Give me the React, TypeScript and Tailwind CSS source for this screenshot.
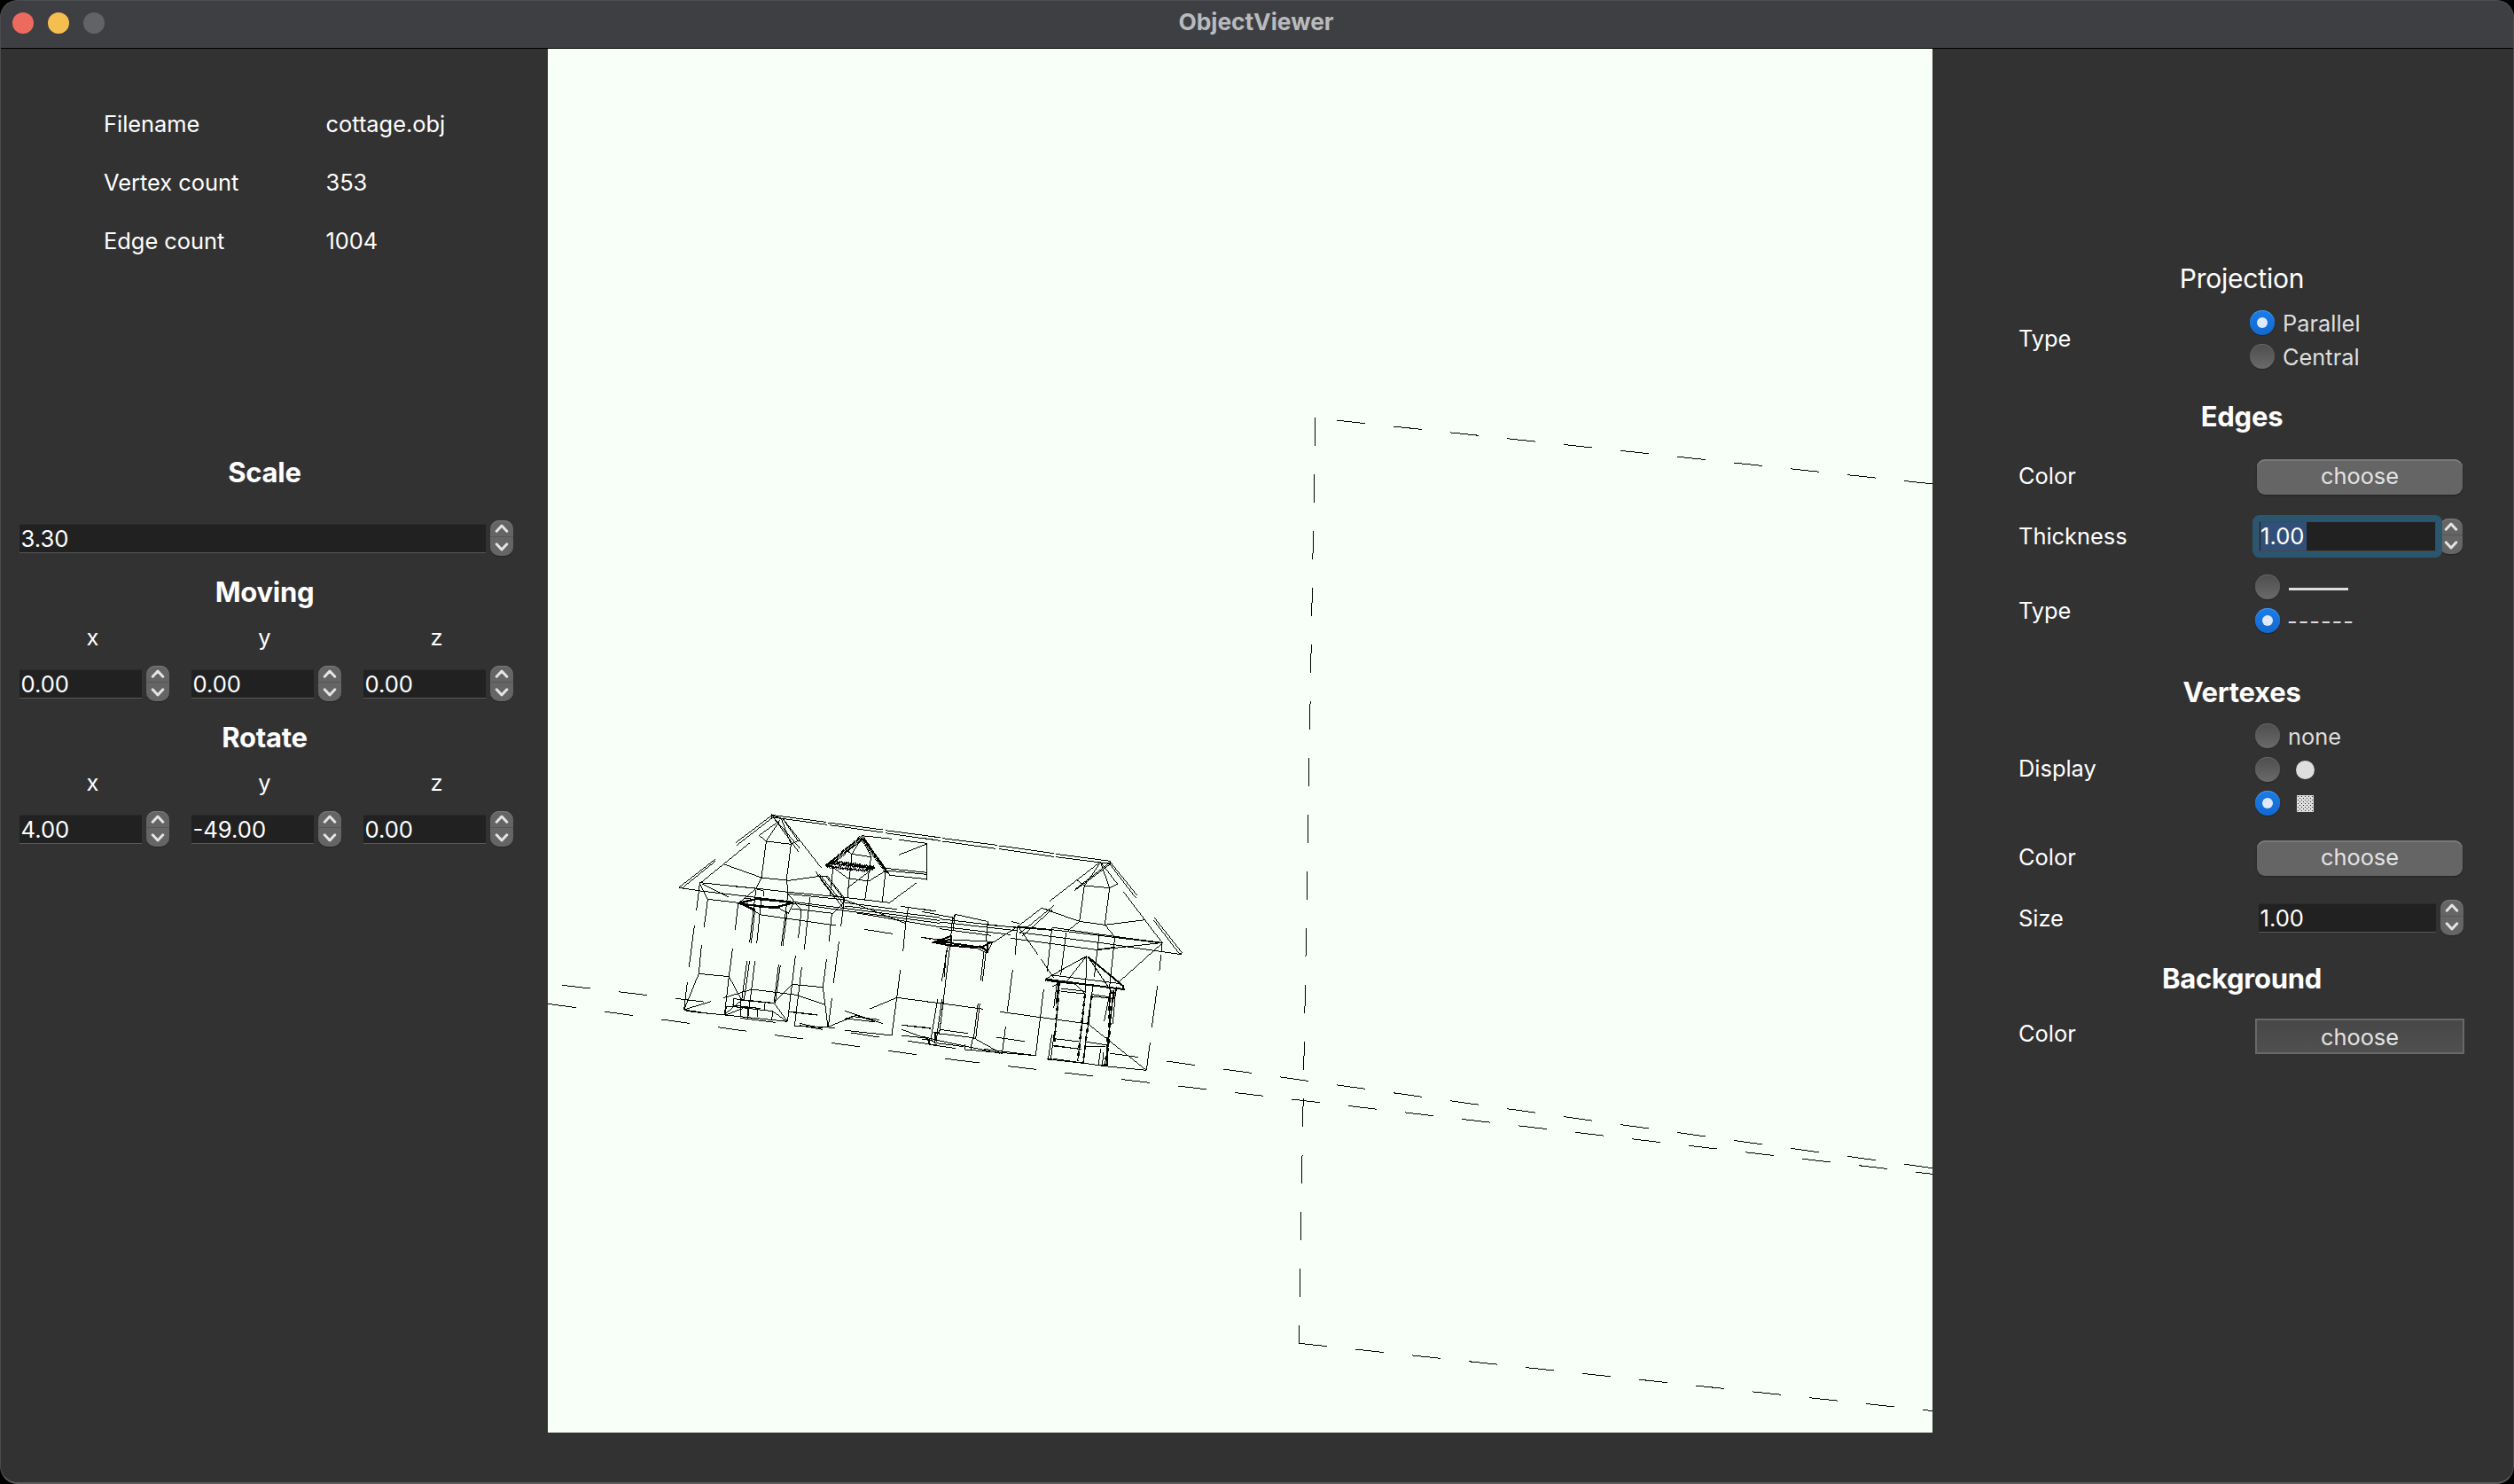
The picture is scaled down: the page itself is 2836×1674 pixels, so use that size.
import type { ReactNode } from 'react';

/* ---------- controls ---------- */

function Heading({ children, className = '' }: { children: ReactNode; className?: string }) {
  return (
    <h2 className={`flex h-10 items-center justify-center pt-px text-[31px] font-bold leading-10 tracking-[-0.25px] ${className}`}>
      {children}
    </h2>
  );
}

function Chevron({ down = false }: { down?: boolean }) {
  return (
    <svg
      viewBox="0 0 16 10"
      className={down ? 'h-[10px] w-4 rotate-180' : 'h-[10px] w-4'}
      fill="none"
      stroke="#e4e4e4"
      strokeWidth="3"
      strokeLinecap="round"
      strokeLinejoin="round"
    >
      <path d="M2.2 8.2 L8 2 L13.8 8.2" />
    </svg>
  );
}

function Stepper() {
  return (
    <div className="flex h-10 w-[26px] shrink-0 flex-col overflow-hidden rounded-[10px] bg-[#656565] shadow-[inset_0_1px_0_#7d7d7d,0_1px_1px_#252525]">
      <div className="flex h-[19px] items-center justify-center border-b border-[#555]">
        <Chevron />
      </div>
      <div className="flex h-[21px] items-center justify-center">
        <Chevron down />
      </div>
    </div>
  );
}

function Field({ value, className = '' }: { value: string; className?: string }) {
  return (
    <div
      className={`mt-1 flex h-[33px] items-center border-t border-b border-t-[#2b2b2b] border-b-[#585858] bg-[#212121] pt-px pl-[1.5px] text-[25.6px] leading-none ${className}`}
    >
      {value}
    </div>
  );
}

function Spin({ value }: { value: string }) {
  return (
    <div className="flex h-10 items-start gap-[5px] pl-1">
      <Field value={value} className="min-w-0 flex-1" />
      <Stepper />
    </div>
  );
}

function AxisGroup({ title, values }: { title: string; values: [string, string, string] }) {
  return (
    <section className="mt-5">
      <Heading>{title}</Heading>
      <div className="mt-4 grid grid-cols-3 gap-x-[21px] gap-y-4">
        {['x', 'y', 'z'].map((axis) => (
          <div key={axis} className="flex h-8 items-center justify-center">
            {axis}
          </div>
        ))}
        {values.map((v, i) => (
          <Spin key={i} value={v} />
        ))}
      </div>
    </section>
  );
}

function Radio({ checked = false, children }: { checked?: boolean; children?: ReactNode }) {
  return (
    <div className="flex h-7 items-center gap-[9px] text-[#dedede]">
      {checked ? (
        <span className="flex size-7 shrink-0 items-center justify-center rounded-full bg-linear-to-b from-[#1b7ce8] to-[#1269cf] shadow-[inset_0_1px_0_#4a97ec,0_1px_1px_#222]">
          <span className="size-3 rounded-full bg-[#deeafa]" />
        </span>
      ) : (
        <span className="size-7 shrink-0 rounded-full bg-linear-to-b from-[#4e4e4e] to-[#6a6a6a] shadow-[inset_0_1px_0_#676767,0_1px_1px_#252525]" />
      )}
      {children}
    </div>
  );
}

function Row({
  label,
  className = '',
  labelClass = '',
  children,
}: {
  label: string;
  className?: string;
  labelClass?: string;
  children: ReactNode;
}) {
  return (
    <div className={`flex items-center ${className}`}>
      <div className={`w-[263px] shrink-0 ${labelClass}`}>{label}</div>
      {children}
    </div>
  );
}

function ChooseButton() {
  return (
    <button className="ml-[6px] flex h-10 w-[232px] items-center justify-center rounded-[9px] bg-[#656565] pb-[2px] text-[#e3e3e3] shadow-[inset_0_2px_0_#7a7a7a,0_1px_2px_#222]">
      choose
    </button>
  );
}

/* ---------- wireframe ---------- */

const leftWing = `
M391 58L575 82M583 84L768 108M776 110L960 134M396 66L580 91M588 92L768 117M776 119L960 145
M391 55V68M391 60L270 152M396 66L274 160M319 151L148 290M200 208L78 303M200 215L88 306M78 303L88 306
M396 64L488 172M400 70L482 182M391 60L428 70M428 68L560 238M424 70L457 157M420 75L373 147M415 80L349 127L373 147L457 157L485 144
M428 68L482 148M373 147L357 270M457 157L442 275M357 270L338 308L280 356M228 224L357 270L450 280L546 266L580 265L638 340
M442 275L447 325L492 380M148 287L345 307L447 319L638 337L790 355M78 304L150 315L280 330L465 352L640 374L960 415
M175 343L280 355M155 290L245 335M148 290L175 343L163 437M148 290L137 380M270 300L345 307M447 325L640 345L845 425
M465 357L640 382L960 424M460 375L600 391L638 350M640 355L815 377M828 367L947 384M640 366L960 405M680 390L960 437
M278 356L335 383L350 395L608 432M447 392L465 357M705 445L800 460M898 472L960 480M338 308L364 314V332M300 340L465 356M415 373L447 390
M130 432L112 572M154 498L145 595M106 625L95 717M278 357L268 448M259 511L247 605L232 733M338 312L317 490M335 380L322 492M357 340L341 493
M447 323L424 502M444 385L429 502M492 380L482 473M521 337L502 514M595 391L586 485M638 340L626 434M619 487L601 626
M472 535L445 757M493 574L469 772M577 547L565 641L582 775M595 679L583 775M308 552L290 685M317 552L298 682M335 552L311 747
M415 565L400 690M421 567L403 695M145 595L247 605L290 685L232 733M145 595L95 717L187 689M95 719L130 725L235 735L445 757
M95 717L187 731M290 685L400 695L445 757M400 693L460 631L565 641M228 677L325 648L475 667L574 700M262 704V680L395 694
M238 706L355 712M265 707L395 722L445 759M370 690L366 718M343 718V742M395 722L392 752M287 685V740M311 712V748M235 735L295 712
M285 745L404 760M448 723L545 734M485 763L563 780M469 772L606 778M485 770L563 784M238 706L235 735
M583 775L680 735M640 721L767 764M640 748L680 737L740 757M660 739L755 751M722 715L815 676L960 695M640 787L798 804M661 795L755 810
M827 583L815 676L798 804M854 370L845 425L836 520M832 769L930 779M832 784L935 822M832 804L920 814M853 823L950 837M953 680L930 820M940 795H960M925 815V835L960 838M948 795V820
M697 128L572 232M700 130L792 262M663 190L728 200M697 135L663 190L648 335M700 140L728 200L707 345M600 232L589 330M777 250L766 350
M600 235L648 272L720 282L775 248M740 235L648 305M775 238L917 253M780 246L917 259M790 262L917 275M917 154V280M697 128L797 139M823 142L917 154
M917 156L822 193M883 287L790 355M645 178L663 190M541 250L602 330M548 262L595 325M553 258L635 360M560 280L636 375M600 330L638 340M635 340V378M575 265L630 335M589 330L600 335`;

const rightWing = `
M0 126L62 135M70 137L254 160M262 162L446 188M454 190L638 214M0 136L62 145M70 147L250 172M262 173L446 199M454 200L605 219L638 222
M638 214V222M638 218L728 330M634 222L725 340M787 406L880 524L870 530M785 415L873 530M605 216L433 349M632 222L518 310M638 224L515 315
M605 218L550 297L635 305L605 220M605 218L662 292L635 305M525 278L550 297L533 418M635 305L619 430M683 319L813 490
M405 373L533 418L619 430L755 413M533 418L488 455M619 430L653 470M405 373L325 435M446 365L330 460M440 378L338 470M405 373L445 385
M302 418L330 425M60 410L325 440M60 420L325 450M60 435L300 463M325 435L440 446L813 492M330 455L600 490L878 530M60 443L235 466
M300 475L590 514L653 505M815 490L590 515M440 438L600 462L697 475M600 462L812 490M105 412L112 394L220 418M220 430L440 448M0 376L47 384M0 385L104 405
M325 435L240 490M325 435L392 530M403 546L445 608M813 490V523M813 492L668 622M809 530L804 584M797 636L778 776M772 828L760 922
M104 403L98 470M112 394L105 450M223 418L217 485M322 440L316 530M307 582L289 722M283 775L271 868M440 440L424 587M488 455L470 600
M412 648L385 872M600 462L583 607M653 470L635 640M88 500L67 622M82 515L76 605M95 500L60 790M217 520L205 620M210 520L199 618
M240 487L220 525L185 508M53 680L30 820M68 680L48 825M74 680L58 800M190 695L175 815M196 695L182 815M0 688L62 695L208 715M0 817L25 820
M45 796L175 812L270 866M0 807L50 820L265 865M30 820L50 830L142 842M24 815V835L115 848M145 835V852L385 872M172 812L165 852M210 850L385 872M45 796V830
M265 724L562 765L760 922M0 472L30 478M105 480L240 487M558 535L420 612M465 585L558 537M440 600L665 628M558 535L487 625M558 535L553 660M560 536L645 660M565 540L630 640
M470 645L555 655M470 655L553 663M575 665L640 675M578 672L655 680M458 620L446 712M552 660L527 892M580 630L560 765M640 640L617 755M656 650L646 765
M448 795L436 885M440 800L427 885M448 815L532 825M448 840L538 850M553 825L632 838M427 885L545 898M445 883L620 908L760 922M605 850L597 905M615 860L610 905M520 630L555 665
M553 840L620 842M424 885H440M595 905H630M465 625L440 640M418 612V620`;

/* Edges that run close together read as solid black. */
const heavy = {
  left: 'M282 356L345 341L462 354M285 359L400 372L460 356M285 357L335 380M330 366L415 371',
  leftHatch: 'M693 133L577 230M697 138L585 232M702 138L785 256M694 136L778 248M575 232L705 246L740 235L600 214ZM598 222L735 240',
  right: 'M40 489L98 468V500ZM60 489H98M50 487L98 480M98 492L200 506L238 487M98 500L190 508M195 500L222 520V488M200 507L230 490M564 540L680 636M420 614L683 648L680 634M424 618L520 629',
  rightPosts: 'M466 622L448 825M552 664L527 892M575 670L545 898M640 650L635 700L632 830L618 908M648 650L624 908M660 640L645 680M628 810V905M462 622L455 700',
};

function Viewport() {
  return (
    <svg
      viewBox="618 55 1562 1561"
      className="h-[1561px] w-[1562px] shrink-0 bg-[#f7fff8]"
      fill="none"
      stroke="#000"
      shapeRendering="crispEdges"
    >
      {/* ground plane and backdrop edges */}
      <path d="M1483.7 471 L1465.3 1515.3" strokeDasharray="32 32" />
      <path d="M1508 474.2 L2180 545.9" strokeDasharray="32.18 32.18" />
      <path d="M1465.3 1515.3 L2180 1591.5" strokeDasharray="32.18 32.18" />
      <path d="M634 1111.3 L1050 1160.2" strokeDasharray="32.22 32.22" />
      <path d="M1060 1161.3 L2180 1317.7" strokeDasharray="32.31 32.31" />
      <path d="M618 1132.3 L1082 1196.3" strokeDasharray="32.3 32.3" />
      <path d="M1073.3 1195.2 L2180 1324.4" strokeDasharray="32.22 32.22" />
      {/* cottage */}
      <g transform="translate(740 900) scale(0.33333)">
        <path d={leftWing} strokeWidth="3" />
        <path d={heavy.left} strokeWidth="7" />
        <path d={heavy.leftHatch} strokeWidth="10" strokeDasharray="2.5 2.5" />
        <path d={heavy.leftHatch} strokeWidth="3" />
      </g>
      <g transform="translate(1040 900) scale(0.33333)">
        <path d={rightWing} strokeWidth="3" />
        <path d={heavy.right} strokeWidth="6" />
        <path d={heavy.rightPosts} strokeWidth="3" />
        <path d={heavy.rightPosts} strokeWidth="7" strokeDasharray="14 14" />
      </g>
    </svg>
  );
}

/* ---------- panels ---------- */

function LeftPanel() {
  const info = [
    ['Filename', 'cottage.obj'],
    ['Vertex count', '353'],
    ['Edge count', '1004'],
  ];
  return (
    <aside className="w-[618px] shrink-0 pt-[52px]">
      <dl className="pl-[117px]">
        {info.map(([k, v]) => (
          <div key={k} className="flex h-[66px] items-center">
            <dt className="w-[250.5px]">{k}</dt>
            <dd>{v}</dd>
          </div>
        ))}
      </dl>
      <div className="ml-[18px] w-[561px]">
        <Heading className="mt-[207px]">Scale</Heading>
        <div className="mt-[35px]">
          <Spin value="3.30" />
        </div>
        <AxisGroup title="Moving" values={['0.00', '0.00', '0.00']} />
        <AxisGroup title="Rotate" values={['4.00', '-49.00', '0.00']} />
      </div>
    </aside>
  );
}

function RightPanel() {
  return (
    <aside className="flex-1 pt-[239px] pl-[97px]">
      <div className="w-[504px]">
        <h2 className="flex h-10 items-center justify-center text-[30px] leading-10 tracking-[-0.2px]">Projection</h2>
        <Row label="Type" className="mt-4" labelClass="pb-[3px]">
          <div className="-ml-[2px] flex flex-col gap-[10px]">
            <Radio checked>
              <span className="pt-px">Parallel</span>
            </Radio>
            <Radio>
              <span className="pt-px">Central</span>
            </Radio>
          </div>
        </Row>

        <Heading className="mt-[33px]">Edges</Heading>
        <Row label="Color" className="mt-[29px]" labelClass="pb-[2px]">
          <ChooseButton />
        </Row>
        <Row label="Thickness" className="mt-[27px]">
          <div className="flex h-10 items-start gap-[4px] pl-[8px]">
            <div className="relative z-10 mt-[3px] flex h-[34px] w-[200px] items-center rounded-[1px] border border-[#4a4643] bg-[#212121] pl-[1px] shadow-[0_0_0_1px_#212121] outline-[7px] outline-[#2b566f]">
              <span className="flex h-8 w-[52px] items-center bg-[#324f79] text-[25.6px] leading-none">1.00</span>
            </div>
            <Stepper />
          </div>
        </Row>
        <Row label="Type" className="mt-[23px]" labelClass="pt-4">
          <div className="ml-1 flex flex-col gap-[10px]">
            <Radio>
              <span className="mt-[5px] ml-[1px] h-[3px] w-[67px] bg-[#dedede]" />
            </Radio>
            <Radio checked>
              <span className="-ml-px pt-[2px] tracking-[0.95px]">------</span>
            </Radio>
          </div>
        </Row>

        <Heading className="mt-[46px]">Vertexes</Heading>
        <Row label="Display" className="mt-4" labelClass="pb-[2px]">
          <div className="ml-1 flex flex-col gap-[10px]">
            <Radio>
              <span className="pt-px">none</span>
            </Radio>
            <Radio>
              <span className="ml-[9px] size-[21px] rounded-full bg-[#dedede]" />
            </Radio>
            <Radio checked>
              <svg viewBox="0 0 19 19" className="ml-[10px] size-[19px]">
                <defs>
                  <pattern id="dots" width="4" height="4" patternUnits="userSpaceOnUse">
                    <rect width="4" height="4" fill="#dedede" />
                    <rect x="1" y="1" width="1" height="1" fill="#333" />
                    <rect x="3" y="3" width="1" height="1" fill="#333" />
                  </pattern>
                </defs>
                <rect width="19" height="19" fill="url(#dots)" />
              </svg>
            </Radio>
          </div>
        </Row>
        <Row label="Color" className="mt-[28px]" labelClass="pb-[2px]">
          <ChooseButton />
        </Row>
        <Row label="Size" className="mt-[27px]" labelClass="pt-px">
          <div className="flex h-10 items-start gap-[5px] pl-[8px]">
            <Field value="1.00" className="w-[200px]" />
            <Stepper />
          </div>
        </Row>

        <Heading className="mt-[28px]">Background</Heading>
        <Row label="Color" className="mt-[26px]" labelClass="pb-[6px]">
          <button className="ml-1 flex h-10 w-[236px] items-center justify-center border-2 border-[#696969] bg-linear-to-b from-[#474747] to-[#505050] pt-px text-[#e3e3e3]">
            choose
          </button>
        </Row>
      </div>
    </aside>
  );
}

export default function App() {
  return (
    <div className="h-[1674px] w-[2836px] overflow-hidden bg-black">
      <div className="relative flex h-full w-full flex-col overflow-hidden rounded-[20px] bg-[#323232] font-['Inter',sans-serif] text-[25.4px] leading-8 text-white">
        <header className="flex h-[55px] shrink-0 items-center border-b border-black bg-[#3e3f43]">
          <div className="flex w-[300px] gap-4 pb-[2px] pl-[14px]">
            <span className="size-6 rounded-full bg-[#ed6a5e]" />
            <span className="size-6 rounded-full bg-[#f4bf4f]" />
            <span className="size-6 rounded-full bg-[#626366]" />
          </div>
          <h1 className="flex-1 pb-[5px] text-center text-[26.3px] font-bold leading-8 text-[#b9babd]">ObjectViewer</h1>
          <div className="w-[302px]" />
        </header>
        <main className="flex flex-1 items-start">
          <LeftPanel />
          <Viewport />
          <RightPanel />
        </main>
        <div className="pointer-events-none absolute inset-0 rounded-[20px] border-x border-t border-b-2 border-x-[#4c4c4e] border-t-[#4c4d50] border-b-[#5c5c5c]" />
      </div>
    </div>
  );
}
